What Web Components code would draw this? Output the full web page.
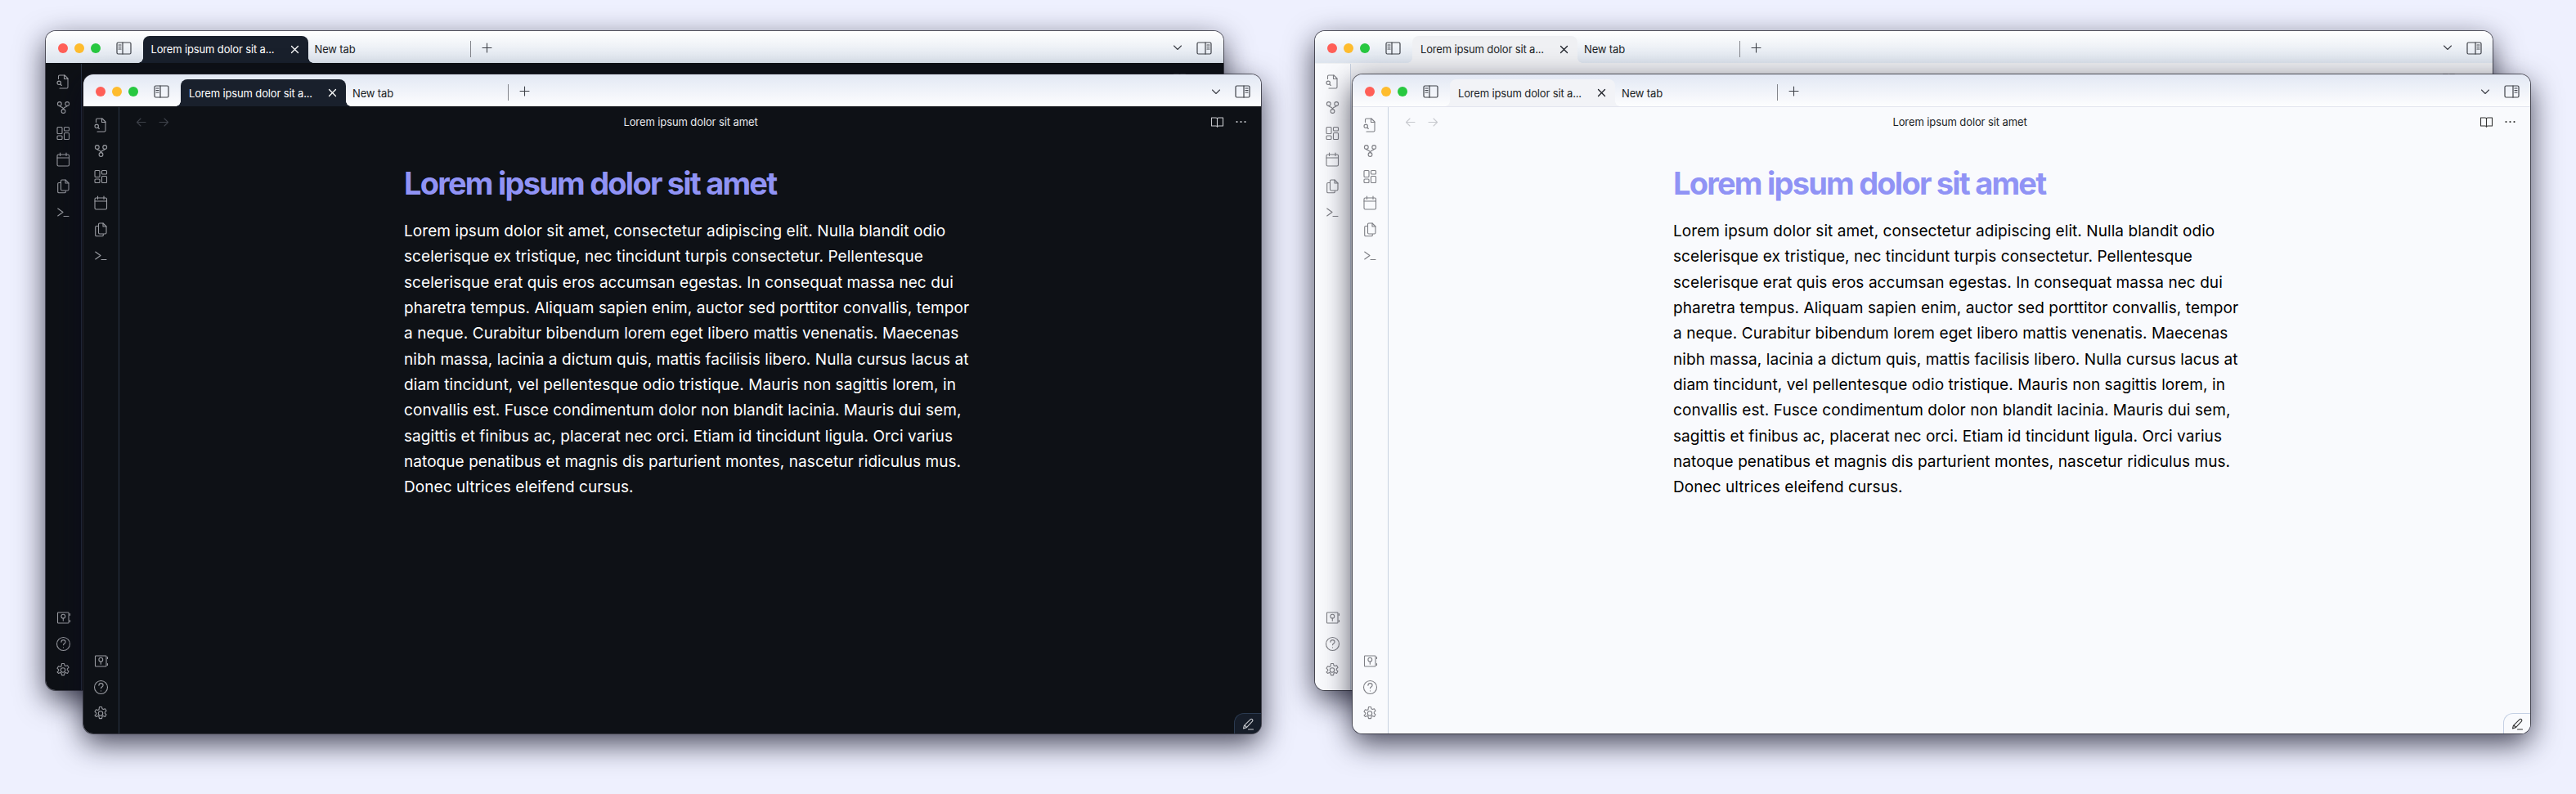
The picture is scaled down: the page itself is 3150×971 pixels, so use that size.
<!DOCTYPE html>
<html lang="la">
<head>
<meta charset="utf-8">
<title>Theme preview</title>
<style>
  html, body { margin: 0; height: 100%; }
  body { background: #eef0fe; overflow: hidden; font-family: Inter, "Liberation Sans", sans-serif; }
</style>
</head>
<body>
<preview-stage>
  <app-window theme="dark" style="left:55.5px;top:37.5px" tone="back"></app-window>
  <app-window theme="dark" style="left:102px;top:91px" tone="front" doc>
    <h1 slot="heading">Lorem ipsum dolor sit amet</h1>
    <p slot="body">Lorem ipsum dolor sit amet, consectetur adipiscing elit. Nulla blandit odio scelerisque ex tristique, nec tincidunt turpis consectetur. Pellentesque scelerisque erat quis eros accumsan egestas. In consequat massa nec dui pharetra tempus. Aliquam sapien enim, auctor sed porttitor convallis, tempor a neque. Curabitur bibendum lorem eget libero mattis venenatis. Maecenas nibh massa, lacinia a dictum quis, mattis facilisis libero. Nulla cursus lacus at diam tincidunt, vel pellentesque odio tristique. Mauris non sagittis lorem, in convallis est. Fusce condimentum dolor non blandit lacinia. Mauris dui sem, sagittis et finibus ac, placerat nec orci. Etiam id tincidunt ligula. Orci varius natoque penatibus et magnis dis parturient montes, nascetur ridiculus mus. Donec ultrices eleifend cursus.</p>
  </app-window>
  <app-window theme="light" style="left:1608px;top:37.5px" tone="back"></app-window>
  <app-window theme="light" style="left:1654px;top:91px" tone="front" doc>
    <h1 slot="heading">Lorem ipsum dolor sit amet</h1>
    <p slot="body">Lorem ipsum dolor sit amet, consectetur adipiscing elit. Nulla blandit odio scelerisque ex tristique, nec tincidunt turpis consectetur. Pellentesque scelerisque erat quis eros accumsan egestas. In consequat massa nec dui pharetra tempus. Aliquam sapien enim, auctor sed porttitor convallis, tempor a neque. Curabitur bibendum lorem eget libero mattis venenatis. Maecenas nibh massa, lacinia a dictum quis, mattis facilisis libero. Nulla cursus lacus at diam tincidunt, vel pellentesque odio tristique. Mauris non sagittis lorem, in convallis est. Fusce condimentum dolor non blandit lacinia. Mauris dui sem, sagittis et finibus ac, placerat nec orci. Etiam id tincidunt ligula. Orci varius natoque penatibus et magnis dis parturient montes, nascetur ridiculus mus. Donec ultrices eleifend cursus.</p>
  </app-window>
</preview-stage>

<script>
'use strict';

const ICONS = {
  leftPanel: '<rect x="1" y="1" width="17" height="14" rx="1.5"/><path d="M8 1v14M3 4h3M3 6.5h3M3 9h3"/>',
  rightPanel: '<rect x="1" y="1" width="17" height="14" rx="1.5"/><path d="M11 1v14M13 4h3M13 6.5h3M13 9h3"/>',
  search: '<path d="M3.5 6.5V3.5c0-.8.6-1.5 1.4-1.5h6.1l4 4v10.5c0 .8-.6 1.5-1.4 1.5H5"/><path d="M10.5 2v4.5H15"/><circle cx="4.2" cy="11.3" r="2.2"/><path d="M5.8 13l1.5 1.5"/>',
  graph: '<circle cx="4.8" cy="5" r="2.4"/><circle cx="14.2" cy="5" r="2.4"/><circle cx="9.5" cy="14" r="2.4"/><path d="M4.8 7.4c0 1.8 4.7 1 4.7 4.2M14.2 7.4c0 1.8-4.7 1-4.7 4.2"/>',
  canvas: '<rect x="2" y="1.5" width="6" height="8" rx="1"/><rect x="10.5" y="1.5" width="6" height="4.5" rx="1"/><rect x="2" y="12" width="6" height="4.5" rx="1"/><rect x="10.5" y="8.5" width="6" height="8" rx="1"/>',
  calendar: '<rect x="2" y="3" width="14.5" height="14" rx="1.5"/><path d="M2 7h14.5M5.5 1v3.5M13 1v3.5"/>',
  copy: '<path d="M6.5 3.5c0-.8.5-1.5 1.3-1.5H12l4 4v7.5c0 .8-.6 1.5-1.4 1.5H7.9c-.8 0-1.4-.7-1.4-1.5z"/><path d="M12 2v4h4"/><path d="M6.5 5.5H4c-.8 0-1.3.6-1.3 1.3v9.7c0 .8.5 1.3 1.3 1.3h7c.8 0 1.3-.5 1.3-1.3v-1"/>',
  terminal: '<path d="M2.7 5L9 9.5 2.7 14M10 14.5h6"/>',
  vault: '<rect x="2.5" y="3" width="13.5" height="13" rx=".8"/><path d="M17.5 4.5v2M17.5 12.5v2"/><circle cx="9.3" cy="7.7" r="2.4"/><path d="M9.3 10.1v3.2"/>',
  help: '<circle cx="9.5" cy="9.5" r="8"/><path d="M6.9 7.2c0-1.6 1.1-2.6 2.6-2.6s2.6 1 2.6 2.4c0 2-2.6 1.900-2.600 3.800M9.500 13.800v.1"/>',
  gear: '<path d="M7.500 1.500h3l.5 2.300 1.300.7 2.200-.8 1.500 2.600-1.700 1.500v1.500l1.700 1.500-1.500 2.600-2.200-.8-1.300.7-.5 2.300h-3l-.5-2.300-1.300-.7-2.200.8L2 11.800l1.700-1.500V8.800L2 7.300l1.500-2.600 2.200.8L7 4.800z"/><circle cx="9" cy="9.500" r="2.700"/>',
  back: '<path d="M13 7.500H2.500M7 3L2.500 7.500 7 12"/>',
  forward: '<path d="M2 7.500h10.500M8 3l4.500 4.500L8 12"/>',
  book: '<path d="M1.500 3H7c.8 0 1.500.4 1.500 1.200 0-.8.7-1.200 1.500-1.200h5.500v10H10c-.8 0-1.500.4-1.500 1.200 0-.8-.7-1.200-1.500-1.200H1.500zM8.500 4.200v10"/>',
  more: '<circle cx="2.500" cy="7" r="1.100" fill="currentColor" stroke="none"/><circle cx="7.500" cy="7" r="1.100" fill="currentColor" stroke="none"/><circle cx="12.500" cy="7" r="1.100" fill="currentColor" stroke="none"/>',
  chevron: '<path d="M1.500 2L6 6.500 10.500 2"/>',
  pencil: '<path d="M11 2.800c.8-.7 1.800-.6 2.400.1s.6 1.600 0 2.300L6.200 12.800l-3.700 1.100.9-3.600zM4 10l2.500 2.500M8.500 15h6"/>',
  plus: '<path d="M6.500 1v11M1 6.500h11"/>',
  close: '<path d="M1.500 1.500l8 8M9.500 1.500l-8 8"/>',
};

class AppIcon extends HTMLElement {
  constructor() {
    super();
    const size = (this.getAttribute('size') || '19').split(' ');
    const w = size[0];
    const h = size[1] || w;
    const stroke = this.getAttribute('stroke') || '1.1';
    this.attachShadow({ mode: 'open' });
    this.shadowRoot.innerHTML = `
      <style>
        :host { display: inline-flex; line-height: 0; }
        svg { fill: none; stroke: currentColor; stroke-width: ${stroke}; stroke-linecap: round; stroke-linejoin: round; }
      </style>
      <svg width="${w}" height="${h}" viewBox="0 0 ${w} ${h}">${ICONS[this.getAttribute('name')] || ''}</svg>
    `;
  }
}
customElements.define('app-icon', AppIcon);

class PreviewStage extends HTMLElement {
  constructor() {
    super();
    this.attachShadow({ mode: 'open' });
    this.shadowRoot.innerHTML = `
      <style>
        :host { display: block; position: relative; width: 3150px; height: 971px; background: #eef0fe; overflow: hidden; }
      </style>
      <slot></slot>
    `;
  }
}
customElements.define('preview-stage', PreviewStage);

class TrafficLights extends HTMLElement {
  constructor() {
    super();
    this.attachShadow({ mode: 'open' });
    this.shadowRoot.innerHTML = `
      <style>
        :host { display: flex; gap: 8px; }
        i { width: 12px; height: 12px; border-radius: 50%; }
      </style>
      <i style="background:#ff5f57"></i><i style="background:#febc2e"></i><i style="background:#28c840"></i>
    `;
  }
}
customElements.define('traffic-lights', TrafficLights);

class WindowRibbon extends HTMLElement {
  constructor() {
    super();
    this.attachShadow({ mode: 'open' });
    const item = (name) => `<app-icon name="${name}" size="19"></app-icon>`;
    this.shadowRoot.innerHTML = `
      <style>
        :host {
          display: flex; flex-direction: column; justify-content: space-between; align-items: center;
          width: 44px; flex: none; padding: 12px 0 15px; box-sizing: border-box;
          border-right: 1px solid var(--line); color: var(--icon);
        }
        div { display: flex; flex-direction: column; gap: 13px; align-items: center; }
      </style>
      <div>${['search', 'graph', 'canvas', 'calendar', 'copy', 'terminal'].map(item).join('')}</div>
      <div>${['vault', 'help', 'gear'].map(item).join('')}</div>
    `;
  }
}
customElements.define('window-ribbon', WindowRibbon);

class TabBar extends HTMLElement {
  constructor() {
    super();
    this.attachShadow({ mode: 'open' });
    this.shadowRoot.innerHTML = `
      <style>
        :host {
          display: flex; align-items: flex-end; height: 40px; box-sizing: border-box; flex: none;
          padding-left: 15px; padding-right: 13.5px; position: relative;
          background: linear-gradient(var(--bar-top), var(--bar-bottom));
          border-bottom: 1px solid var(--bar-line);
          font-size: 13px; letter-spacing: -.15px; color: var(--tab-text);
        }
        traffic-lights { align-self: flex-start; margin-top: 15px; }
        .panel { align-self: flex-start; margin: 13px 14px 0 19px; color: var(--bar-icon); }
        .tab {
          display: flex; align-items: center; justify-content: space-between; box-sizing: border-box;
          width: 202px; height: 33px; padding: 0 11px 0 10px; position: relative;
          border-radius: 8px 8px 0 0; background: var(--tab-bg); color: var(--tab-active-text);
        }
        .tab::before, .tab::after { content: ''; position: absolute; bottom: 0; width: 6px; height: 6px; }
        .tab::before { left: -6px; background: radial-gradient(circle at 0 0, transparent 5.5px, var(--tab-bg) 6px); }
        .tab::after { right: -6px; background: radial-gradient(circle at 100% 0, transparent 5.5px, var(--tab-bg) 6px); }
        .tab span { white-space: nowrap; }
        .tab app-icon { color: var(--tab-active-text); }
        .new {
          display: flex; align-items: center; box-sizing: border-box;
          width: 199px; height: 33px; padding-left: 8px; position: relative;
        }
        .new::after { content: ''; position: absolute; right: 0; top: 6px; height: 20px; width: 1px; background: var(--sep); }
        .plus { align-self: flex-start; margin: 14px 0 0 13px; color: var(--bar-icon); }
        .tail { margin-left: auto; align-self: flex-start; display: flex; align-items: center; gap: 17px; margin-top: 13px; color: var(--bar-icon); }
      </style>
      <traffic-lights></traffic-lights>
      <app-icon class="panel" name="leftPanel" size="19 16" stroke="1.2"></app-icon>
      <div class="tab"><span>Lorem ipsum dolor sit a...</span><app-icon name="close" size="11" stroke="1.3"></app-icon></div>
      <div class="new">New tab</div>
      <app-icon class="plus" name="plus" size="13" stroke="1.1"></app-icon>
      <div class="tail">
        <app-icon name="chevron" size="12 9" stroke="1.1"></app-icon>
        <app-icon name="rightPanel" size="19 16" stroke="1.2"></app-icon>
      </div>
    `;
  }
}
customElements.define('tab-bar', TabBar);

class AppWindow extends HTMLElement {
  constructor() {
    super();
    this.attachShadow({ mode: 'open' });
    this.shadowRoot.innerHTML = `
      <style>
        :host {
          position: absolute; display: flex; flex-direction: column; box-sizing: border-box;
          width: 1440px; height: 806px; border-radius: 12px; overflow: visible;
          font-family: Inter, "Liberation Sans", sans-serif;
          box-shadow: 0 0 0 1px rgba(40,40,50,.75), 0 12px 36px rgba(10,10,30,.75);
        }
        :host([theme="dark"]) {
          --pane: #0e1116; --ribbon: #0e1116; --line: #2b3444; --icon: #9a9ca2; --title: #e6e8ec; --muted: #3c4048;
          --tab-bg: #19202c; --tab-active-text: #ffffff; --tab-text: #1c1f26; --text: #ffffff; --view-icon: #c8cace; --corner: #161d29; --corner-line: #2b3a50;
          --bar-line: #0e1116;
        }
        :host([theme="light"]) {
          --pane: #f9fafd; --ribbon: #f9fafd; --line: #c9d2e0; --icon: #7d7e84; --title: #1c1f26; --muted: #c8cacf;
          --tab-bg: #f2f3f7; --tab-active-text: #1c1f26; --tab-text: #1c1f26; --text: #000000; --view-icon: #333; --corner: #f9fafd; --corner-line: #c4d0e4;
          --bar-line: #e2e4ee;
        }
        :host([tone="back"]) { --bar-top: #ffffff; --bar-bottom: #dde4ee; }
        :host([tone="front"]) { --bar-top: #e2e8f4; --bar-bottom: #fdfdfe; }
        :host([tone="back"][theme="light"]) { --pane: #eff0f3; --tab-bg: #eff0f3; --bar-line: #eff0f3; }
        :host { --bar-icon: #3f4249; --sep: #84868c; }
        .frame { display: flex; flex-direction: column; height: 100%; border-radius: 12px; overflow: hidden; position: relative; }
        .main { display: flex; flex: 1; min-height: 0; background: var(--ribbon); }
        .pane { flex: 1; position: relative; background: var(--pane); display: flex; flex-direction: column; min-width: 0; }
        .head { display: flex; align-items: center; height: 36px; padding: 0 17px 0 19px; flex: none; position: relative; }
        .nav { display: flex; gap: 13px; color: var(--muted); }
        .name { position: absolute; left: 1px; right: 0; text-align: center; font-size: 13px; letter-spacing: -.1px; color: var(--title); }
        .actions { margin-left: auto; display: flex; align-items: center; gap: 13px; color: var(--view-icon); position: relative; }
        .doc { width: 700px; margin: 0 auto; color: var(--text); font-size: 19px; line-height: 31.35px; letter-spacing: .07px; }
        .corner {
          position: absolute; right: 0; bottom: 0; width: 33px; height: 25px; box-sizing: border-box;
          border: 1px solid var(--corner-line); border-right: 0; border-bottom: 0; border-radius: 12px 0 0 0;
          background: var(--corner); color: var(--view-icon); display: flex; align-items: center; justify-content: center;
        }
        ::slotted(h1) {
          margin: 35px 0 21px; font-size: 38px; line-height: 44px; font-weight: 700; letter-spacing: -1.78px; color: #9093f5;
        }
        ::slotted(p) { margin: 0; }
      </style>
      <div class="frame">
        <tab-bar></tab-bar>
        <div class="main">
          <window-ribbon></window-ribbon>
          <div class="pane">
            <div class="head">
              <div class="nav"><app-icon name="back" size="15"></app-icon><app-icon name="forward" size="15"></app-icon></div>
              <div class="name"></div>
              <div class="actions"><app-icon name="book" size="17 16"></app-icon><app-icon name="more" size="15 14"></app-icon></div>
            </div>
            <div class="doc"><slot name="heading"></slot><slot name="body"></slot></div>
            <div class="corner"><app-icon name="pencil" size="17"></app-icon></div>
          </div>
        </div>
      </div>
    `;
  }
  connectedCallback() {
    if (this.hasAttribute('doc')) {
      this.shadowRoot.querySelector('.name').textContent = this.querySelector('h1').textContent;
    }
  }
}
customElements.define('app-window', AppWindow);
</script>
</body>
</html>
